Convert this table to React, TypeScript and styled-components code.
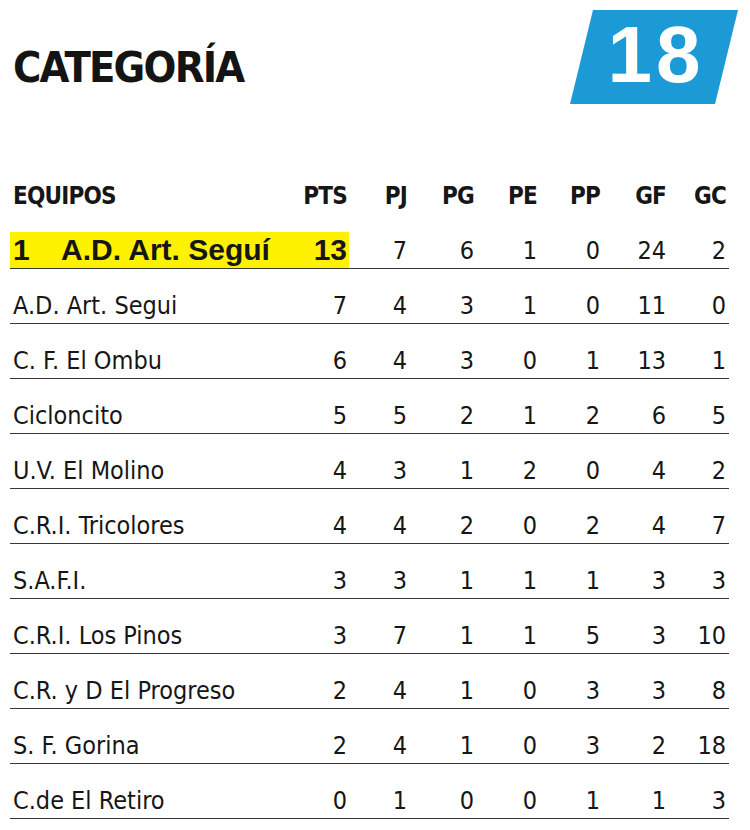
import React from "react";
import styled, { createGlobalStyle } from "styled-components";

const GlobalStyle = createGlobalStyle`
  body {
    margin: 0;
    background: #ffffff;
    color: #161616;
    font-family: "DejaVu Sans Condensed", "DejaVu Sans", sans-serif;
    font-stretch: condensed;
  }
`;

const Page = styled.div`
  width: 750px;
  height: 830px;
  overflow: hidden;
  background: #ffffff;
`;

const TitleBar = styled.div`
  display: flex;
  justify-content: space-between;
  align-items: flex-start;
  height: 114px;
  padding: 0 12px 0 13px;
  box-sizing: border-box;
`;

const Title = styled.h1`
  margin: 46px 0 0 0;
  font-family: "DejaVu Sans Condensed", "DejaVu Sans", sans-serif;
  font-stretch: condensed;
  font-weight: 700;
  font-size: 43px;
  line-height: 43px;
  letter-spacing: -1.8px;
  color: #141414;
`;

const Badge = styled.div`
  margin-top: 10px;
  width: 168px;
  height: 94px;
  display: flex;
  align-items: center;
  justify-content: center;
  padding: 0 0 5px 4px;
  box-sizing: border-box;
  background: #1b9ad6;
  clip-path: polygon(23px 0, 100% 0, calc(100% - 23px) 100%, 0 100%);
  color: #ffffff;
  font-family: "Liberation Sans", Arial, sans-serif;
  font-weight: 700;
  font-size: 80px;
  line-height: 80px;
  letter-spacing: 4px;
`;

const Table = styled.div`
  width: 719px;
  margin-left: 10px;
`;

const Row = styled.div<{ $head?: boolean }>`
  display: grid;
  grid-template-columns: 280px 59px 58px 67px 63px 63px 66px 60px;
  padding-right: 3px;
  height: ${(p) => (p.$head ? "100px" : "55px")};
  box-sizing: border-box;
  border-bottom: ${(p) => (p.$head ? "none" : "1px solid #383838")};
`;

const Cell = styled.div<{ $name?: boolean; $head?: boolean; $mark?: boolean; $pad?: number }>`
  display: flex;
  align-items: flex-end;
  justify-content: ${(p) => (p.$name ? "flex-start" : "flex-end")};
  padding: ${(p) => (p.$name ? "0 0 5px 3px" : `0 ${p.$pad ?? 0}px 5px 0`)};
  font-size: ${(p) => (p.$head ? "24px" : "25px")};
  line-height: 25px;
  font-weight: ${(p) => (p.$head ? 700 : 400)};
  letter-spacing: ${(p) => (p.$head ? "-0.8px" : "0")};
  white-space: nowrap;
  ${(p) =>
    p.$mark &&
    `
    align-self: end;
    height: 36px;
    box-sizing: border-box;
    padding-bottom: 3px;
    background: #fff200;
    font-family: "Liberation Sans", Arial, sans-serif;
    font-stretch: normal;
    font-weight: 700;
    font-size: 30px;
    line-height: 30px;
  `}
`;

const Rank = styled.span`
  display: inline-block;
  width: 48px;
`;

const columns = ["PTS", "PJ", "PG", "PE", "PP", "GF", "GC"];

const leader = { name: "A.D. Art. Seguí", stats: [13, 7, 6, 1, 0, 24, 2] };

const teams: [string, number[]][] = [
  ["A.D. Art. Segui", [7, 4, 3, 1, 0, 11, 0]],
  ["C. F. El Ombu", [6, 4, 3, 0, 1, 13, 1]],
  ["Cicloncito", [5, 5, 2, 1, 2, 6, 5]],
  ["U.V. El Molino", [4, 3, 1, 2, 0, 4, 2]],
  ["C.R.I. Tricolores", [4, 4, 2, 0, 2, 4, 7]],
  ["S.A.F.I.", [3, 3, 1, 1, 1, 3, 3]],
  ["C.R.I. Los Pinos", [3, 7, 1, 1, 5, 3, 10]],
  ["C.R. y D El Progreso", [2, 4, 1, 0, 3, 3, 8]],
  ["S. F. Gorina", [2, 4, 1, 0, 3, 2, 18]],
  ["C.de El Retiro", [0, 1, 0, 0, 1, 1, 3]],
];

export default function App() {
  return (
    <Page>
      <GlobalStyle />
      <TitleBar>
        <Title>CATEGORÍA</Title>
        <Badge>18</Badge>
      </TitleBar>
      <Table>
        <Row $head>
          <Cell $name $head>EQUIPOS</Cell>
          {columns.map((c, i) => (
            <Cell key={c} $head $pad={i === 0 ? 2 : 0}>
              {c}
            </Cell>
          ))}
        </Row>
        <Row>
          <Cell $name $mark>
            <Rank>1</Rank>
            {leader.name}
          </Cell>
          {leader.stats.map((v, i) => (
            <Cell key={i} $mark={i === 0} $pad={i === 0 ? 2 : 0}>
              {v}
            </Cell>
          ))}
        </Row>
        {teams.map(([name, stats]) => (
          <Row key={name}>
            <Cell $name>{name}</Cell>
            {stats.map((v, i) => (
              <Cell key={i} $pad={i === 0 ? 2 : 0}>
                {v}
              </Cell>
            ))}
          </Row>
        ))}
      </Table>
    </Page>
  );
}
